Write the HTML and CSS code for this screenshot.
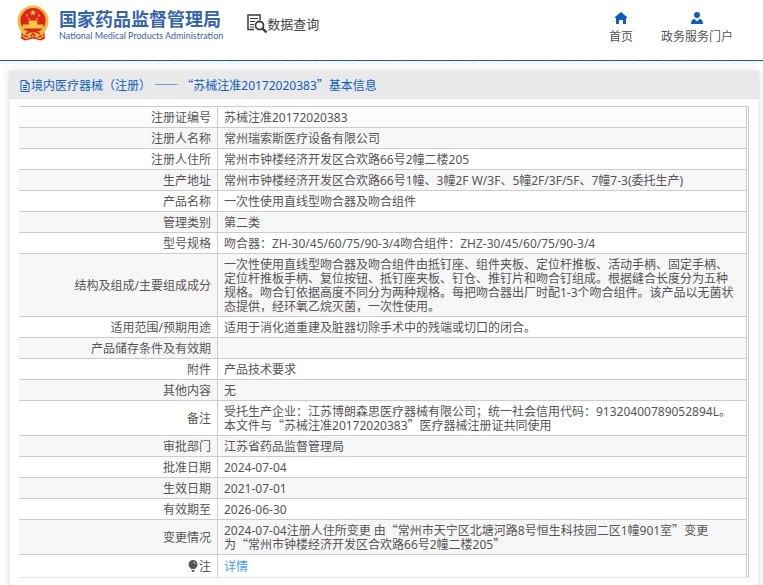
FILE: index.html
```
<!DOCTYPE html>
<html lang="zh-CN">

<head>
    <meta charset="UTF-8">
    <meta name="viewport" content="width=device-width, initial-scale=1.0">
    <title>国家药品监督管理局 数据查询</title>
    <link rel="stylesheet" href="styles.css">
</head>

<body>
    <header class="header">
        <div class="brand">
            <svg class="emblem" viewBox="0 0 32 35">
                <path d="M5 23h22l1 10-4 2-8-2-8 2-4-2z" fill="#d9261c"/>
                <circle cx="16" cy="15.500" r="15.500" fill="#eebc38"/>
                <circle cx="16" cy="15" r="12.500" fill="#e3211b"/>
                <path d="M16 4l1 2.200h2.300l-1.900 1.500.7 2.300-2.100-1.400-2.100 1.400.7-2.300-1.900-1.500H15z" fill="#f9d648"/>
                <path d="M9 9h2v2H9zM21 9h2v2h-2zM11 12.500h2v1.500h-2zM19 12.500h2v1.500h-2z" fill="#f3a52f"/>
                <path d="M12 15h8l1 2h-1v2h6l1 4H5l1-4h6v-2h-1z" fill="#f6c843"/>
                <path d="M3 23c4 3 8 3 13 3s9 0 13-3l-3 6c-6 3-14 3-20 0z" fill="#eebc38"/>
                <path d="M9 29c2-4 12-4 14 0M12 33l4-5 4 5" fill="none" stroke="#d9261c" stroke-width="1.500"/>
                <path d="M5 30l4 3 5-2M27 30l-4 3-5-2" fill="none" stroke="#f3b935" stroke-width="1.500"/>
            </svg>
            <div class="brand-text">
                <div class="brand-cn">国家药品监督管理局</div>
                <div class="brand-en">National Medical Products Administration</div>
            </div>
        </div>
        <div class="query">
            <svg class="query-icon" viewBox="0 0 20 20" fill="none" stroke="#3a3a4a">
                <path d="M7 15.500H1V1h12v5" stroke-width="1.500"/>
                <path d="M3 4.500h8M3 7.500h5M3 10.500h4M3 13h4" stroke-width="1"/>
                <circle cx="12.500" cy="11.500" r="4" stroke-width="1.800"/>
                <path d="M15.500 14.500l4 4" stroke-width="2.400"/>
            </svg>
            <span>数据查询</span>
        </div>
        <nav class="nav">
            <a href="#">
                <svg viewBox="0 0 12 12" fill="#0a5fc4"><path d="M6 0l6 5v1h-1v6H8V8H4v4H1V6H0V5z"/></svg>
                首页
            </a>
            <a href="#">
                <svg viewBox="0 0 12 12" fill="#0a5fc4"><circle cx="6" cy="3" r="3"/><path d="M0 12c0-3 1-5 3.500-5L6 9.500 8.500 7C11 7 12 9 12 12z"/></svg>
                政务服务门户
            </a>
        </nav>
    </header>
    <div class="stripe"></div>

    <main class="panel">
        <h1 class="panel-title">
            <svg class="doc-icon" viewBox="0 0 11 12" fill="none" stroke="#0a5fc4"><path d="M1.500.5h5l3 3v8h-8zM6.500.5v3h3M3.500 5.500h4M3.500 7.500h4M3.500 9.500h4"/></svg>
            <span>境内医疗器械（注册） <span class="full">——</span> <span class="full">“</span>苏械注准20172020383<span class="full">”</span>基本信息</span>
        </h1>
        <table class="info">
            <tbody>
                <tr class="current"><th scope="row">注册证编号</th><td>苏械注准20172020383</td></tr>
                <tr><th scope="row">注册人名称</th><td>常州瑞索斯医疗设备有限公司</td></tr>
                <tr><th scope="row">注册人住所</th><td>常州市钟楼经济开发区合欢路66号2幢二楼205</td></tr>
                <tr><th scope="row">生产地址</th><td>常州市钟楼经济开发区合欢路66号1幢、3幢2F W/3F、5幢2F/3F/5F、7幢7-3(委托生产)</td></tr>
                <tr><th scope="row">产品名称</th><td>一次性使用直线型吻合器及吻合组件</td></tr>
                <tr><th scope="row">管理类别</th><td>第二类</td></tr>
                <tr><th scope="row">型号规格</th><td>吻合器：ZH-30/45/60/75/90-3/4吻合组件：ZHZ-30/45/60/75/90-3/4</td></tr>
                <tr><th scope="row">结构及组成/主要组成成分</th><td>一次性使用直线型吻合器及吻合组件由抵钉座、组件夹板、定位杆推板、活动手柄、固定手柄、定位杆推板手柄、复位按钮、抵钉座夹板、钉仓、推钉片和吻合钉组成。根据缝合长度分为五种规格。吻合钉依据高度不同分为两种规格。每把吻合器出厂时配1-3个吻合组件。该产品以无菌状态提供，经环氧乙烷灭菌，一次性使用。</td></tr>
                <tr><th scope="row">适用范围/预期用途</th><td>适用于消化道重建及脏器切除手术中的残端或切口的闭合。</td></tr>
                <tr><th scope="row">产品储存条件及有效期</th><td></td></tr>
                <tr><th scope="row">附件</th><td>产品技术要求</td></tr>
                <tr><th scope="row">其他内容</th><td>无</td></tr>
                <tr><th scope="row">备注</th><td>受托生产企业：江苏博朗森思医疗器械有限公司；统一社会信用代码：91320400789052894L。<br>本文件与<span class="full">“</span>苏械注准20172020383<span class="full">”</span>医疗器械注册证共同使用</td></tr>
                <tr><th scope="row">审批部门</th><td>江苏省药品监督管理局</td></tr>
                <tr><th scope="row">批准日期</th><td>2024-07-04</td></tr>
                <tr><th scope="row">生效日期</th><td>2021-07-01</td></tr>
                <tr><th scope="row">有效期至</th><td>2026-06-30</td></tr>
                <tr><th scope="row">变更情况</th><td>2024-07-04注册人住所变更 由<span class="full">“</span>常州市天宁区北塘河路8号恒生科技园二区1幢901室<span class="full">”</span>变更<br>为<span class="full">“</span>常州市钟楼经济开发区合欢路66号2幢二楼205<span class="full">”</span></td></tr>
                <tr class="note">
                    <th scope="row"><svg class="bulb" viewBox="0 0 10 12"><path d="M5 0a4.500 4.500 0 0 1 2.500 8.200L7 9H3l-.5-.8A4.500 4.500 0 0 1 5 0zM3.500 10h3v1l-1 1h-1l-1-1z" fill="#555"/><path d="M5.500 2c1 .2 1.600 1 1.700 2" fill="none" stroke="#ddd"/></svg>注</th>
                    <td><a href="#">详情</a></td>
                </tr>
            </tbody>
        </table>
    </main>
</body>

</html>
```
FILE: styles.css
```
body {
    margin: 0;
    background-color: #fff;
    color: #555;
    font-family: "Noto Sans", "Noto Sans CJK SC", sans-serif;
    font-size: 12px;
    line-height: 14px;
    text-spacing-trim: space-all;
}

a {
    text-decoration: none;
}

.header {
    display: flex;
    align-items: flex-start;
    height: 60px;
    padding: 0 30px 0 17px;
    border-bottom: 1px solid #0a5fc4;
}

.brand {
    display: flex;
    gap: 10px;
    padding-top: 5px;
}

.emblem {
    width: 32px;
    height: 36px;
}

.brand-text {
    padding-top: 3px;
    color: #3463b0;
    white-space: nowrap;
}

.brand-cn {
    font-family: "Noto Sans CJK SC", sans-serif;
    font-size: 18px;
    font-weight: bold;
    line-height: 20px;
}

.brand-en {
    font-family: Lato, sans-serif;
    font-size: 9px;
    line-height: 16px;
}

.query {
    display: flex;
    align-items: center;
    padding: 14px 0 0 24px;
    color: #444;
    font-size: 13px;
    line-height: 20px;
}

.query-icon {
    width: 20px;
    height: 20px;
}

.nav {
    display: flex;
    gap: 28px;
    margin-left: auto;
    padding-top: 12px;
}

.nav a {
    display: flex;
    flex-direction: column;
    align-items: center;
    gap: 6px;
    color: #555;
}

.nav svg {
    width: 12px;
    height: 12px;
}

.stripe {
    height: 3px;
    background: repeating-linear-gradient(135deg, #fff 0, #fff 2px, #ececec 2px, #ececec 3px);
}

.panel {
    margin: 7px 4px 0 9px;
    padding-bottom: 20px;
    border: 1px solid #e9e9e9;
    border-top: none;
    box-shadow: 0 0 8px rgba(0, 0, 0, 0.15);
}

.panel-title {
    display: flex;
    align-items: center;
    height: 26px;
    margin: 0;
    padding: 2px 0 0 9px;
    background-color: #e9e9e9;
    color: #0a5fc4;
    font-size: 12px;
    font-weight: normal;
}

.doc-icon {
    width: 12px;
    height: 12px;
}

/* full-width quotes and dashes */
.full {
    font-family: "Noto Sans CJK SC", sans-serif;
    line-height: 0;
}

.info {
    width: calc(100% - 18px);
    margin: 7px 9px 0;
    border-top: 1px solid #ccc;
    border-right: 3px double #ccc;
    border-collapse: separate;
    border-spacing: 0;
}

.info th,
.info td {
    padding: 4px 8px 2px 6px;
    border-bottom: 1px solid #ccc;
    font-weight: normal;
    text-align: left;
    vertical-align: middle;
}

.info th {
    width: 186px;
    padding: 4px 6px 2px;
    border-right: 1px solid #ccc;
    text-align: right;
}

.info tr:nth-child(even) {
    background-color: #f7f7f7;
}

.info .current {
    background-color: #fcfdff;
}

.info .note th,
.info .note td {
    padding-top: 5px;
    padding-bottom: 3px;
    border-bottom-color: #e8e8e8;
}

.note a {
    color: #409eff;
}

.bulb {
    width: 10px;
    height: 12px;
    margin-right: 1px;
    vertical-align: -1px;
}
```
